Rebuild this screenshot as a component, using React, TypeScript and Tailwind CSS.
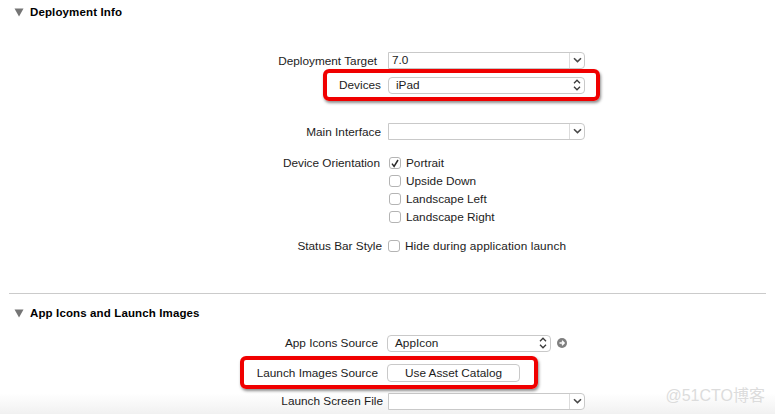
import React from 'react';

const Chevron = () => (
  <svg width="9" height="6" viewBox="0 0 9 6" fill="none">
    <path d="M1 1.2 L4.5 4.6 L8 1.2" stroke="#4a4a4a" strokeWidth="1.6" />
  </svg>
);

const UpDown = () => (
  <svg width="8" height="12" viewBox="0 0 8 12" fill="none">
    <path d="M1 4.2 L4 1.2 L7 4.2 M1 7.8 L4 10.8 L7 7.8" stroke="#3a3a3a" strokeWidth="1.3" />
  </svg>
);

const Triangle = () => (
  <svg width="10" height="9" viewBox="0 0 10 9" className="shrink-0">
    <path d="M0.5 0.5 H9.5 L5 8.5 Z" fill="#757575" />
  </svg>
);

const Row: React.FC<{ label: string; pr: string; pt?: string; mt?: string; ml?: string; children?: React.ReactNode }> = ({ label, pr, pt, mt, ml, children }) => (
  <div className={`flex items-center h-[24px] ${mt ?? ''}`}>
    <div className={`w-[384px] ${pt ?? 'pt-[2px]'} text-right whitespace-nowrap shrink-0 ${pr}`}>{label}</div>
    <div className={`flex items-center ${ml ?? 'ml-[4px]'}`}>{children}</div>
  </div>
);

const Combo: React.FC<{ value?: string }> = ({ value }) => (
  <div className="flex items-center h-[17px] w-[197px] bg-white border border-[#c9c9c9] rounded-r-[4px]">
    <div className="flex-1 pl-[3px] pt-[2px] leading-none">{value}</div>
    <div className="w-[15px] h-full flex items-center justify-center border-l border-[#dcdcdc]">
      <Chevron />
    </div>
  </div>
);

const Popup: React.FC<{ value: string; w: string }> = ({ value, w }) => (
  <div className={`flex items-center justify-between h-[17px] ${w} pl-[7px] pr-[3px] bg-white border border-[#c9c9c9] rounded-[4px]`}>
    <span className="leading-none pt-[2px]">{value}</span>
    <UpDown />
  </div>
);

const Check: React.FC<{ label: string; checked?: boolean; ml?: string; tracking?: string }> = ({ label, checked, ml, tracking }) => (
  <div className="flex items-center h-[18px]">
    <div className={`w-[12px] h-[12px] ${ml ?? 'ml-[1px]'} bg-white border border-[#b4b4b4] rounded-[3px] flex items-center justify-center`}>
      {checked && (
        <svg width="8" height="9" viewBox="0 0 8 9" fill="none">
          <path d="M1 4.6 L3.1 7.4 L7 1" stroke="#2b2b2b" strokeWidth="1.5" />
        </svg>
      )}
    </div>
    <span className={`ml-[5px] pt-[1px] whitespace-nowrap ${tracking ?? ''}`}>{label}</span>
  </div>
);

const Highlight: React.FC<{ className: string }> = ({ className }) => (
  <div className={`absolute border-[4px] border-[#f00000] rounded-[6px] shadow-[1px_2px_3px_rgba(0,0,0,0.45)] ${className}`} />
);

export default function App() {
  return (
    <div className="relative w-[775px] h-[414px] overflow-hidden bg-gradient-to-b from-white from-[95%] to-[#f1f1f1] text-[#1c1c1c] text-[11.8px] font-['Liberation_Sans',Arial,sans-serif]">
      <div className="flex items-center h-[24px] pl-[14px]">
        <Triangle />
        <span className="ml-[6px] pt-[2px] font-bold text-[11.5px] tracking-[0.13px] text-black">Deployment Info</span>
      </div>

      <Row label="Deployment Target" pr="pr-[7px]" pt="pt-[4px]" mt="mt-[24px]">
        <Combo value="7.0" />
      </Row>
      <Row label="Devices" pr="pr-[3px]" mt="mt-[1px]">
        <Popup value="iPad" w="w-[197px]" />
      </Row>
      <Row label="Main Interface" pr="pr-[3px]" pt="pt-[4px]" mt="mt-[22px]">
        <Combo />
      </Row>

      <div className="flex mt-[11px]">
        <div className="w-[384px] h-[18px] pt-[1px] pr-[4px] flex items-center justify-end shrink-0">Device Orientation</div>
        <div className="ml-[4px] flex flex-col">
          <Check label="Portrait" checked />
          <Check label="Upside Down" />
          <Check label="Landscape Left" />
          <Check label="Landscape Right" />
        </div>
      </div>

      <div className="flex items-center h-[18px] mt-[11px]">
        <div className="w-[384px] pt-[1px] pr-[2px] text-right whitespace-nowrap shrink-0">Status Bar Style</div>
        <div className="ml-[4px]">
          <Check label="Hide during application launch" ml="ml-0" tracking="tracking-[0.1px]" />
        </div>
      </div>

      <div className="mx-[9px] mt-[38px] border-t border-[#cbcbcb]" />

      <div className="flex items-center h-[24px] mt-[7px] pl-[14px]">
        <Triangle />
        <span className="ml-[6px] pt-[2px] font-bold text-[11.5px] tracking-[0.13px] text-black">App Icons and Launch Images</span>
      </div>

      <Row label="App Icons Source" pr="pr-[6px]" ml="ml-[3px]" mt="mt-[6px]">
        <Popup value="AppIcon" w="w-[164px]" />
        <div className="ml-[6px] w-[10px] h-[10px] rounded-full bg-[#7f7f7f] flex items-center justify-center">
          <svg width="8" height="8" viewBox="0 0 8 8" fill="none">
            <path d="M1.5 4 H6 M4 1.8 L6.2 4 L4 6.2" stroke="#fff" strokeWidth="1.3" />
          </svg>
        </div>
      </Row>
      <Row label="Launch Images Source" pr="pr-[6px]" ml="ml-[3px]" mt="mt-[6px]">
        <div className="flex items-center justify-center w-[133px] h-[18px] pt-[2px] bg-white border border-[#c9c9c9] rounded-[4px]">
          Use Asset Catalog
        </div>
      </Row>
      <Row label="Launch Screen File" pr="pr-[1px]" mt="mt-[4px]">
        <Combo />
      </Row>

      <Highlight className="left-[323px] top-[69px] w-[277px] h-[32px]" />
      <Highlight className="left-[240px] top-[356px] w-[298px] h-[33px]" />

      <div className="absolute right-[10px] bottom-[10px] text-[16px] leading-none text-[#dcdcdc] font-['Liberation_Sans','Noto_Sans_CJK_SC',sans-serif]">
        @51CTO博客
      </div>
    </div>
  );
}
